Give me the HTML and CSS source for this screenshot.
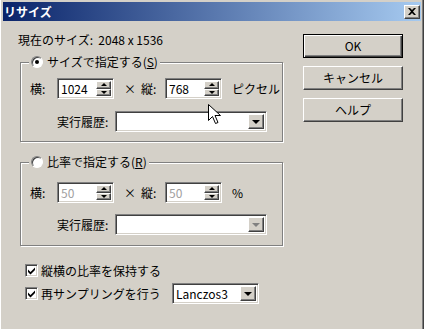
FILE: index.html
```html
<!DOCTYPE html>
<html lang="ja">

<head>
    <meta charset="UTF-8">
    <title>リサイズ</title>
    <link rel="stylesheet" href="styles.css">
</head>

<body>
    <div class="window">
        <div class="titlebar">
            <span class="title">リサイズ</span>
            <span class="close">
                <svg width="8" height="7" viewBox="0 0 8 7"><path d="M0 0h2l2 2 2-2h2L5 3.5 8 7H6L4 5 2 7H0l3-3.5z" fill="#000"/></svg>
            </span>
        </div>
        <div class="client">
            <div class="main">
                <p class="current">現在のサイズ:&nbsp; 2048 x 1536</p>

                <fieldset class="group first">
                    <legend><span class="radio checked"></span>サイズで指定する(<u>S</u>)</legend>
                    <div class="row">
                        <span class="lbl">横:</span>
                        <div class="edit"><span class="value">1024</span><span class="spin"><span class="up"></span><span class="down"></span></span></div>
                        <span class="times">×</span>
                        <span class="lbl lbl-v">縦:</span>
                        <div class="edit"><span class="value">768</span><span class="spin"><span class="up"></span><span class="down"></span></span></div>
                        <span class="unit">ピクセル</span>
                    </div>
                    <div class="row history">
                        <span class="lbl lbl-h">実行履歴:</span>
                        <div class="combo"><span class="value"></span><span class="drop"></span></div>
                    </div>
                </fieldset>

                <fieldset class="group second">
                    <legend><span class="radio"></span>比率で指定する(<u>R</u>)</legend>
                    <div class="row">
                        <span class="lbl">横:</span>
                        <div class="edit disabled"><span class="value">50</span><span class="spin"><span class="up"></span><span class="down"></span></span></div>
                        <span class="times">×</span>
                        <span class="lbl lbl-v">縦:</span>
                        <div class="edit disabled"><span class="value">50</span><span class="spin"><span class="up"></span><span class="down"></span></span></div>
                        <span class="unit">%</span>
                    </div>
                    <div class="row history">
                        <span class="lbl lbl-h">実行履歴:</span>
                        <div class="combo disabled"><span class="value"></span><span class="drop"></span></div>
                    </div>
                </fieldset>

                <div class="check-row">
                    <span class="check"><svg width="9" height="9" viewBox="0 0 9 9"><path d="M1 3.5l2.5 2.5 4.5-4.5v2.5l-4.5 4.5-2.5-2.5z" fill="#000"/></svg></span>
                    <span>縦横の比率を保持する</span>
                </div>
                <div class="check-row resample">
                    <span class="check"><svg width="9" height="9" viewBox="0 0 9 9"><path d="M1 3.5l2.5 2.5 4.5-4.5v2.5l-4.5 4.5-2.5-2.5z" fill="#000"/></svg></span>
                    <span class="check-text">再サンプリングを行う</span>
                    <div class="combo small"><span class="value">Lanczos3</span><span class="drop"></span></div>
                </div>
            </div>

            <div class="buttons">
                <button class="btn default">OK</button>
                <button class="btn">キャンセル</button>
                <button class="btn">ヘルプ</button>
            </div>
        </div>

        <!-- mouse pointer -->
        <svg class="cursor" width="13" height="21" viewBox="0 0 13 21">
            <path d="M0.5 0.5v16l4-4 3 7 2.5-1-3-7h5.5z" fill="#fff" stroke="#000" stroke-width="1"/>
        </svg>
    </div>
</body>

</html>
```

FILE: styles.css
```css
html,
body {
    margin: 0;
    padding: 0;
    width: 424px;
    height: 329px;
    overflow: hidden;
    background: #d4d0c8;
}

body {
    font-family: "Noto Sans CJK JP", "Liberation Sans", sans-serif;
    font-size: 12px;
    line-height: 14px;
    color: #000;
}

.window {
    position: relative;
    box-sizing: border-box;
    width: 424px;
    height: 329px;
    padding: 2px 2px 0 2px;
    background: #d4d0c8;
    border-left: 1px solid #fff;
    border-right: 1px solid #404040;
    box-shadow: inset -1px 0 #808080;
}

.titlebar {
    display: flex;
    align-items: center;
    justify-content: space-between;
    height: 19px;
    background: linear-gradient(to right, #0a246a, #a6caf0);
}

.title {
    padding-left: 1px;
    color: #fff;
    font-weight: bold;
}

.close {
    display: flex;
    align-items: center;
    justify-content: center;
    box-sizing: border-box;
    width: 16px;
    height: 14px;
    margin-right: 1px;
    background: #d4d0c8;
    border: 1px solid;
    border-color: #fff #404040 #404040 #fff;
    box-shadow: inset -1px -1px #808080;
}

.client {
    display: grid;
    grid-template-columns: 300px 100px;
}

.main {
    padding: 12px 0 0 15px;
}

.current {
    margin: 0;
}

.group {
    box-sizing: border-box;
    width: 263px;
    margin: 8px 0 0 2px;
    padding: 9px 0 9px 9px;
    border: 1px solid #808080;
    box-shadow: inset 1px 1px #fff, 1px 1px #fff;
}

.group.second {
    margin-top: 13px;
    padding-top: 13px;
    padding-bottom: 10px;
}

.group legend {
    display: flex;
    align-items: center;
    padding: 0 2px;
    margin-left: -1px;
    background: #d4d0c8;
}

.radio {
    position: relative;
    box-sizing: border-box;
    width: 12px;
    height: 12px;
    margin-right: 4px;
    border-radius: 50%;
    background: #fff;
    border: 1px solid;
    border-color: #808080 #fff #fff #808080;
    box-shadow: inset 1px 1px #404040;
}

.radio.checked::after {
    content: "";
    position: absolute;
    left: 3px;
    top: 3px;
    width: 4px;
    height: 4px;
    border-radius: 50%;
    background: #000;
}

.row {
    display: flex;
    align-items: center;
}

.row.history {
    margin-top: 12px;
    padding-left: 27px;
}

.second .row.history {
    margin-top: 11px;
}

.lbl {
    width: 27px;
}

.lbl-v {
    width: 24px;
}

.lbl-h {
    width: 58px;
}

.times {
    width: 27px;
    padding-left: 10px;
    box-sizing: border-box;
}

.unit {
    margin-left: 10px;
}

.edit,
.combo {
    display: flex;
    box-sizing: border-box;
    height: 21px;
    background: #fff;
    border: 1px solid;
    border-color: #808080 #fff #fff #808080;
    box-shadow: inset 1px 1px #404040, inset -1px -1px #d4d0c8;
    padding: 2px;
}

.edit {
    width: 57px;
}

.combo {
    width: 152px;
}

.combo.small {
    width: 87px;
}

.value {
    flex: 1;
    padding-left: 1px;
    line-height: 15px;
}

.disabled .value {
    color: #a0a0a0;
}

.spin {
    display: flex;
    flex-direction: column;
    width: 15px;
}

.spin span,
.drop,
.btn {
    background: #d4d0c8;
    border: 1px solid;
    border-color: #fff #404040 #404040 #fff;
    box-shadow: inset -1px -1px #808080;
    box-sizing: border-box;
}

.spin span {
    position: relative;
    flex: 1;
}

.spin span::after,
.drop::after {
    content: "";
    position: absolute;
    left: 50%;
    top: 50%;
    margin-left: -3px;
    border-left: 3px solid transparent;
    border-right: 3px solid transparent;
}

.spin .up::after {
    margin-top: -2px;
    border-bottom: 3px solid #000;
}

.spin .down::after {
    margin-top: -1px;
    border-top: 3px solid #000;
}

.drop {
    position: relative;
    width: 16px;
}

.drop::after {
    margin-left: -4px;
    margin-top: -2px;
    border-left-width: 4px;
    border-right-width: 4px;
    border-top: 4px solid #000;
}

.combo.disabled .drop::after {
    border-top-color: #808080;
}

.check-row {
    display: flex;
    align-items: center;
    height: 13px;
    margin-top: 18px;
    padding-left: 7px;
}

.check-row.resample {
    height: 21px;
    margin-top: 6px;
}

.check {
    display: flex;
    align-items: center;
    justify-content: center;
    box-sizing: border-box;
    width: 13px;
    height: 13px;
    margin-right: 3px;
    background: #fff;
    border: 1px solid;
    border-color: #808080 #fff #fff #808080;
    box-shadow: inset 1px 1px #404040, inset -1px -1px #d4d0c8;
}

.check-text {
    width: 131px;
}

.buttons {
    display: flex;
    flex-direction: column;
    gap: 8px;
    padding-top: 13px;
}

.btn {
    height: 24px;
    padding: 0;
    font: inherit;
    color: #000;
}

.btn.default {
    border-color: #000;
    box-shadow: inset 1px 1px #fff, inset -1px -1px #404040, inset -2px -2px #808080;
}

.cursor {
    position: absolute;
    left: 207px;
    top: 104px;
}
```
